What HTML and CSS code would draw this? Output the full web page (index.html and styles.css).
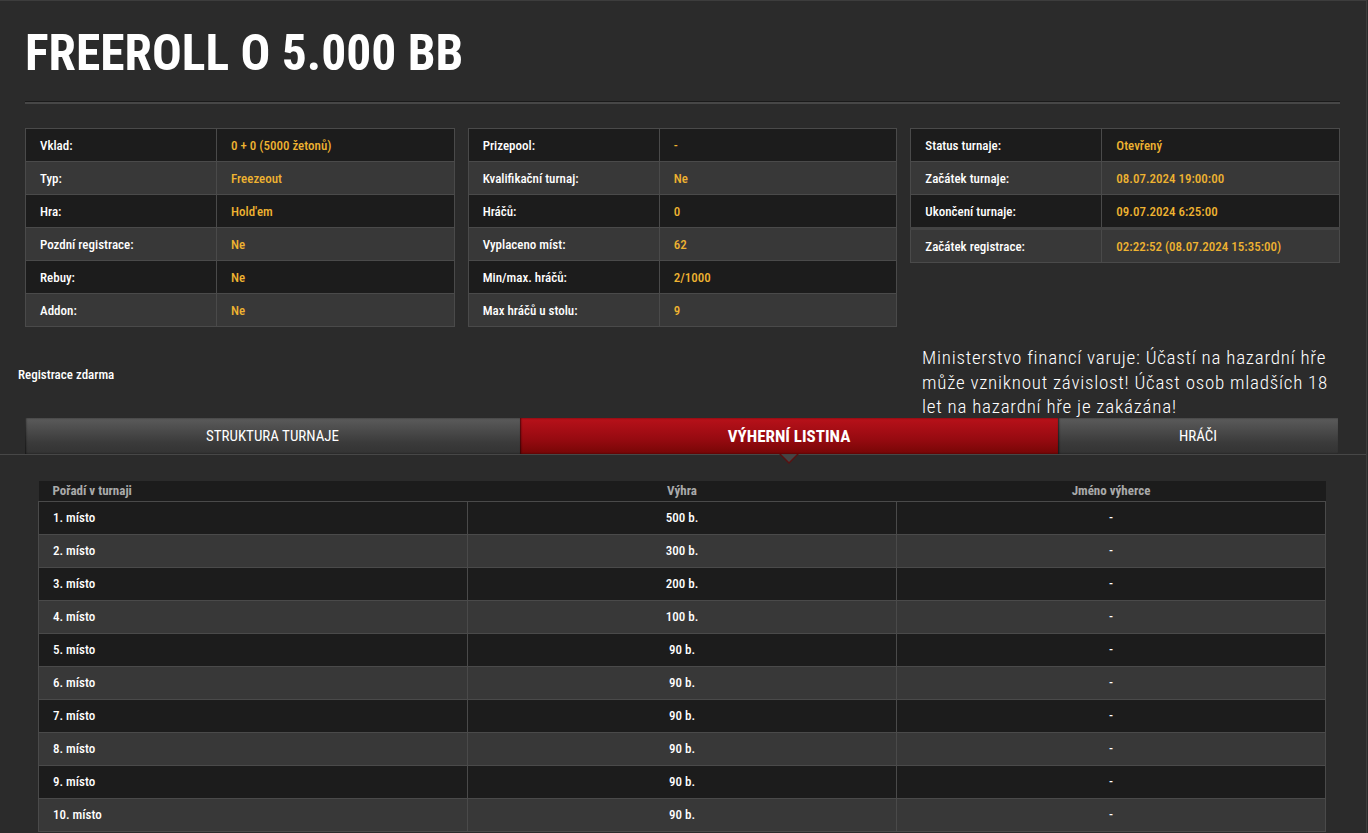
FILE: index.html
```html
<!DOCTYPE html>
<html lang="cs">
<head>
    <meta charset="UTF-8">
    <meta name="viewport" content="width=device-width, initial-scale=1.0">
    <title>Freeroll o 5.000 BB</title>
    <link rel="stylesheet" href="styles.css">
</head>
<body>
    <div id="tournament">
        <h1 class="tournament-title">FREEROLL O 5.000 BB</h1>
        <div class="title-rule"></div>

        <div class="info-grid">
            <table class="info-table">
                <tr><td class="label">Vklad:</td><td class="value">0 + 0 (5000 žetonů)</td></tr>
                <tr><td class="label">Typ:</td><td class="value">Freezeout</td></tr>
                <tr><td class="label">Hra:</td><td class="value">Hold'em</td></tr>
                <tr><td class="label">Pozdní registrace:</td><td class="value">Ne</td></tr>
                <tr><td class="label">Rebuy:</td><td class="value">Ne</td></tr>
                <tr><td class="label">Addon:</td><td class="value">Ne</td></tr>
            </table>
            <table class="info-table">
                <tr><td class="label">Prizepool:</td><td class="value">-</td></tr>
                <tr><td class="label">Kvalifikační turnaj:</td><td class="value">Ne</td></tr>
                <tr><td class="label">Hráčů:</td><td class="value">0</td></tr>
                <tr><td class="label">Vyplaceno míst:</td><td class="value">62</td></tr>
                <tr><td class="label">Min/max. hráčů:</td><td class="value">2/1000</td></tr>
                <tr><td class="label">Max hráčů u stolu:</td><td class="value">9</td></tr>
            </table>
            <table class="info-table">
                <tr><td class="label">Status turnaje:</td><td class="value">Otevřený</td></tr>
                <tr><td class="label">Začátek turnaje:</td><td class="value">08.07.2024 19:00:00</td></tr>
                <tr><td class="label">Ukončení turnaje:</td><td class="value">09.07.2024 6:25:00</td></tr>
                <tr class="registration-row"><td class="label">Začátek registrace:</td><td class="value">02:22:52 (08.07.2024 15:35:00)</td></tr>
            </table>
        </div>

        <div class="register-bar">
            <span class="register-note">Registrace zdarma</span>
            <p class="warning">Ministerstvo financí varuje: Účastí na hazardní hře může vzniknout závislost! Účast osob mladších 18 let na hazardní hře je zakázána!</p>
        </div>

        <div class="tabs">
            <div class="tab tab-structure">STRUKTURA TURNAJE</div>
            <div class="tab tab-prizes active">VÝHERNÍ LISTINA</div>
            <div class="tab tab-players">HRÁČI</div>
        </div>

        <div class="results">
            <table class="results-table">
                <thead>
                    <tr><th class="col-place">Pořadí v turnaji</th><th>Výhra</th><th>Jméno výherce</th></tr>
                </thead>
                <tbody>
                    <tr><td class="col-place">1. místo</td><td>500 b.</td><td>-</td></tr>
                    <tr><td class="col-place">2. místo</td><td>300 b.</td><td>-</td></tr>
                    <tr><td class="col-place">3. místo</td><td>200 b.</td><td>-</td></tr>
                    <tr><td class="col-place">4. místo</td><td>100 b.</td><td>-</td></tr>
                    <tr><td class="col-place">5. místo</td><td>90 b.</td><td>-</td></tr>
                    <tr><td class="col-place">6. místo</td><td>90 b.</td><td>-</td></tr>
                    <tr><td class="col-place">7. místo</td><td>90 b.</td><td>-</td></tr>
                    <tr><td class="col-place">8. místo</td><td>90 b.</td><td>-</td></tr>
                    <tr><td class="col-place">9. místo</td><td>90 b.</td><td>-</td></tr>
                    <tr><td class="col-place">10. místo</td><td>90 b.</td><td>-</td></tr>
                </tbody>
            </table>
        </div>
    </div>
</body>
</html>
```

FILE: styles.css
```css
:root {
    --page-bg: #2b2b2b;
    --row-dark: #1c1c1c;
    --row-light: #383838;
    --cell-border: #4a4a4a;
    --gold: #efb331;
    --text: #ffffff;
    --muted: #aaaaaa;
}

body {
    margin: 0;
    background-color: var(--page-bg);
    color: var(--text);
    font-family: "Roboto Condensed", Roboto, "Liberation Sans", sans-serif;
    overflow: hidden;
}

#tournament {
    border-top: 1px solid #3d3d3d;
    border-right: 1px solid #3d3d3d;
    width: 1366px;
    height: 832px;
}

.tournament-title {
    margin: 0;
    padding: 23px 25px 0;
    font-size: 49.5px;
    font-weight: 700;
    line-height: 58px;
}

.title-rule {
    margin: 19px 26px 0 25px;
    border-top: 1px solid #1a1a1a;
    border-bottom: 2px solid #474747;
}

.info-grid {
    display: grid;
    grid-template-columns: repeat(3, 1fr);
    gap: 13px;
    align-items: start;
    margin: 24px 26px 0 25px;
}

.info-table {
    width: 100%;
    border-collapse: collapse;
    border: 1px solid var(--cell-border);
    font-size: 13px;
    font-weight: 500;
}

.info-table td {
    height: 32px;
    padding: 0 0 0 14px;
    border: 1px solid var(--cell-border);
}

.info-table tr:nth-child(odd) td {
    background-color: var(--row-dark);
}

.info-table tr:nth-child(even) td {
    background-color: var(--row-light);
}

.info-table .label {
    width: 176px;
    color: var(--text);
}

.info-table .value {
    color: var(--gold);
}

.registration-row td {
    border-top: 3px solid #444;
}

.register-bar {
    display: flex;
    justify-content: space-between;
    align-items: center;
    margin: 19px 28px 0 18px;
}

.register-note {
    font-size: 13px;
    font-weight: 500;
    margin-top: -16px;
}

.warning {
    width: 416px;
    margin: 0;
    font-size: 19px;
    font-weight: 300;
    letter-spacing: 0.75px;
    line-height: 24.5px;
}

.tabs {
    display: flex;
    margin: -2px 28px 0 25px;
    height: 36px;
    position: relative;
}

.tabs::after {
    content: "";
    position: absolute;
    left: -25px;
    right: -28px;
    bottom: -1px;
    border-bottom: 1px solid #474747;
}

.tab {
    display: flex;
    align-items: center;
    justify-content: center;
    font-size: 15px;
    background: linear-gradient(to bottom, #5b5b5b, #3a3a3a 70%, #333333);
    box-shadow: inset 1px 0 2px rgb(0 0 0 / 0.6);
    position: relative;
}

.tab-structure {
    width: 495px;
}

.tab-prizes {
    width: 538px;
}

.tab-players {
    flex: 1;
}

.tab.active {
    font-size: 17px;
    font-weight: 700;
    background: linear-gradient(to bottom, #b8111a, #960a10 60%, #760606);
}

.tab.active::after {
    content: "";
    position: absolute;
    left: 50%;
    bottom: -10px;
    margin-left: -10px;
    border-left: 10px solid transparent;
    border-right: 10px solid transparent;
    border-top: 10px solid #5a1010;
    z-index: 2;
}

.tab.active::before {
    content: "";
    position: absolute;
    left: 50%;
    bottom: -8px;
    margin-left: -8px;
    border-left: 8px solid transparent;
    border-right: 8px solid transparent;
    border-top: 8px solid #444444;
    z-index: 3;
}

.results {
    padding: 27px 40px 0 38px;
}

.results-table {
    width: 100%;
    border-collapse: collapse;
    table-layout: fixed;
    font-size: 13px;
    font-weight: 500;
}

.results-table th {
    height: 20px;
    background-color: var(--row-dark);
    color: var(--muted);
    font-weight: 700;
    text-align: center;
    padding: 0;
    border-bottom: 1px solid var(--cell-border);
}

.results-table td {
    height: 32px;
    text-align: center;
    padding: 0;
    border: 1px solid var(--cell-border);
    border-top: 0;
}

.results-table tbody tr:nth-child(odd) td {
    background-color: var(--row-dark);
}

.results-table tbody tr:nth-child(even) td {
    background-color: var(--row-light);
}

.results-table .col-place {
    text-align: left;
    padding-left: 14px;
}
```
